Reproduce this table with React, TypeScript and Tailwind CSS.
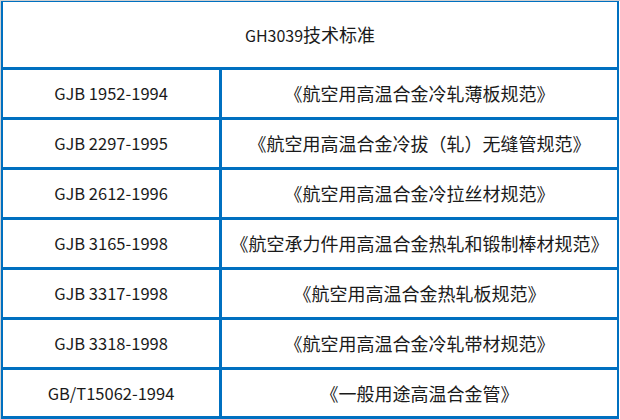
import React from "react";

const rows: [string, string][] = [
  ["GJB 1952-1994", "《航空用高温合金冷轧薄板规范》"],
  ["GJB 2297-1995", "《航空用高温合金冷拔（轧）无缝管规范》"],
  ["GJB 2612-1996", "《航空用高温合金冷拉丝材规范》"],
  ["GJB 3165-1998", "《航空承力件用高温合金热轧和锻制棒材规范》"],
  ["GJB 3317-1998", "《航空用高温合金热轧板规范》"],
  ["GJB 3318-1998", "《航空用高温合金冷轧带材规范》"],
  ["GB/T15062-1994", "《一般用途高温合金管》"],
];

export default function App() {
  return (
    <div
      className="w-[620px] h-[419px] bg-white border-t border-l border-[#d0d0d0] text-[#1a1a1a]"
      style={{ fontFamily: '"Noto Sans CJK SC", "Noto Sans", sans-serif' }}
    >
      <div className="w-[618px] h-[418px] bg-[#0070c0] pt-[1px] pl-[2px] pr-[2px] pb-[3px] grid grid-cols-[216px_395px] grid-rows-[65px_47px_47px_47px_47px_47px_47px_46px] gap-[3px]">
        <div className="col-span-2 bg-white flex items-center justify-center">
          <span className="text-[16px]">GH3039</span>
          <span className="text-[18px]">技术标准</span>
        </div>
        {rows.map(([a, b]) => (
          <React.Fragment key={a}>
            <div className="bg-white flex items-center justify-center text-[16.5px]">{a}</div>
            <div className="bg-white flex items-center justify-center text-[18px]">{b}</div>
          </React.Fragment>
        ))}
      </div>
    </div>
  );
}
